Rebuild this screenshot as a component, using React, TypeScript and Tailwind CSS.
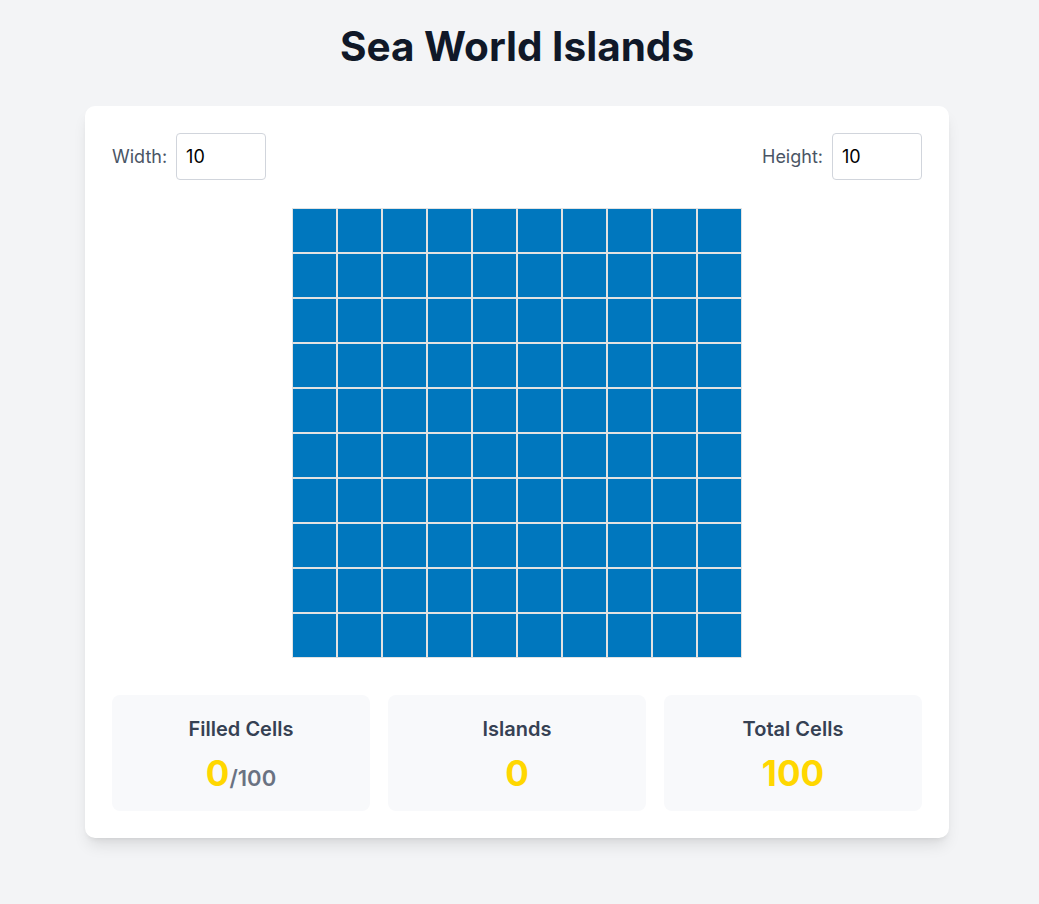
import React, { useState } from 'react';

const StatBox: React.FC<{ label: string; children: React.ReactNode }> = ({ label, children }) => (
  <div className="flex h-[116px] flex-col items-center justify-center rounded-lg bg-[#f8f9fb]">
    <div className="text-xl font-semibold leading-7 text-gray-700">{label}</div>
    <div className="mt-[13px] leading-none">{children}</div>
  </div>
);

export default function App() {
  const [width, setWidth] = useState(10);
  const [height, setHeight] = useState(10);
  const [filled, setFilled] = useState<Set<string>>(new Set());

  const toggle = (r: number, c: number) => {
    const key = `${r}-${c}`;
    const next = new Set(filled);
    if (next.has(key)) next.delete(key);
    else next.add(key);
    setFilled(next);
  };

  const total = width * height;

  return (
    <div className="min-h-screen bg-[#f3f4f6] pr-[5px] pt-[24px] font-['Inter',sans-serif]">
      <h1 className="mb-[37px] text-center text-[40.5px] font-bold leading-[45px] text-gray-900">Sea World Islands</h1>
      <div className="mx-auto w-[864px] rounded-[10px] bg-white p-[27px] shadow-lg">
        <div className="flex items-center justify-between">
          <label className="flex items-center gap-[9px] text-lg text-gray-600">
            Width:
            <input
              type="number"
              value={width}
              onChange={(e) => setWidth(Number(e.target.value) || 0)}
              className="h-[47px] w-[90px] rounded border border-gray-300 px-[9px] text-lg text-black outline-none [appearance:textfield]"
            />
          </label>
          <label className="flex items-center gap-[9px] text-lg text-gray-600">
            Height:
            <input
              type="number"
              value={height}
              onChange={(e) => setHeight(Number(e.target.value) || 0)}
              className="h-[47px] w-[90px] rounded border border-gray-300 px-[9px] text-lg text-black outline-none [appearance:textfield]"
            />
          </label>
        </div>

        <div className="mt-[28px] flex justify-center">
          <div className="grid" style={{ gridTemplateColumns: `repeat(${width}, 45px)` }}>
            {Array.from({ length: height }).map((_, r) =>
              Array.from({ length: width }).map((_, c) => (
                <div
                  key={`${r}-${c}`}
                  onClick={() => toggle(r, c)}
                  className={[
                    'h-[45px] w-[45px] cursor-pointer border border-[#e2e2e2]',
                    filled.has(`${r}-${c}`) ? 'bg-[#8b5a2b]' : 'bg-[#0077be]'
                  ].join(' ')}
                />
              ))
            )}
          </div>
        </div>

        <div className="mt-[37px] grid grid-cols-3 gap-[18px]">
          <StatBox label="Filled Cells">
            <span className="text-[35px] font-bold text-[#ffd700]">{filled.size}</span>
            <span className="text-[22px] font-semibold text-gray-500">/{total}</span>
          </StatBox>
          <StatBox label="Islands">
            <span className="text-[35px] font-bold text-[#ffd700]">0</span>
          </StatBox>
          <StatBox label="Total Cells">
            <span className="text-[35px] font-bold text-[#ffd700]">{total}</span>
          </StatBox>
        </div>
      </div>
    </div>
  );
}
